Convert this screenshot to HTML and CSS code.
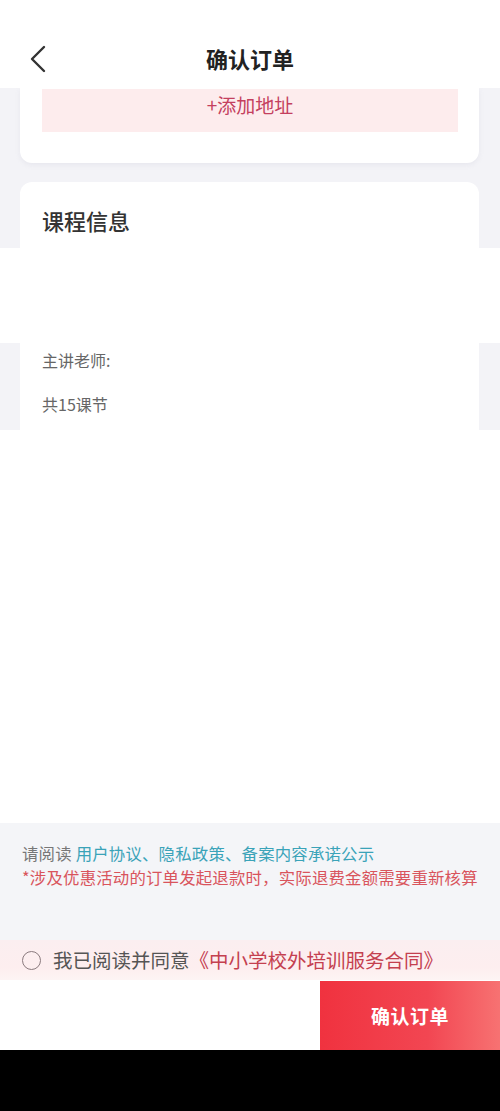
FILE: index.html
```html
<!DOCTYPE html>
<html lang="zh-CN">
<head>
<meta charset="utf-8">
<title>确认订单</title>
<link rel="stylesheet" href="styles.css">
</head>
<body>
<div class="page">
  <header class="topbar">
    <svg class="back" width="24" height="30" viewBox="0 0 24 30" aria-hidden="true">
      <path d="M16 3 L4 15 L16 27" fill="none" stroke="#333" stroke-width="2.4" stroke-linecap="round" stroke-linejoin="round"/>
    </svg>
    <h1 class="title">确认订单</h1>
  </header>

  <section class="gray-zone">
    <div class="card card-address">
      <div class="add-address">+添加地址</div>
    </div>
    <div class="card card-course">
      <h2 class="card-title">课程信息</h2>
    </div>
  </section>

  <div class="blank blank-a"></div>

  <section class="side-zone">
    <div class="course-info">
      <p class="info-line">主讲老师:</p>
      <p class="info-line">共15课节</p>
    </div>
  </section>

  <div class="blank blank-b"></div>

  <section class="notice">
    <p class="notice-line">请阅读 <span class="link">用户协议、隐私政策、备案内容承诺公示</span></p>
    <p class="notice-line warn">*涉及优惠活动的订单发起退款时，实际退费金额需要重新核算</p>
  </section>

  <section class="agree">
    <span class="radio"></span>
    <span class="agree-text">我已阅读并同意<span class="contract">《中小学校外培训服务合同》</span></span>
  </section>

  <footer class="bottom-bar">
    <button class="submit">确认订单</button>
  </footer>

  <div class="black"></div>
</div>
</body>
</html>
```

FILE: styles.css
```css
* { box-sizing: border-box; }

html, body {
  margin: 0;
  padding: 0;
  background: #ffffff;
}

body {
  font-family: "Noto Sans CJK SC", "Noto Sans", sans-serif;
  color: #333;
}

.page {
  width: 500px;
  display: flex;
  flex-direction: column;
}

.topbar {
  height: 88px;
  background: #fff;
  display: flex;
  align-items: center;
  justify-content: center;
  position: relative;
  padding-top: 28px;
}

.back {
  position: absolute;
  left: 28px;
  top: 44px;
}

.title {
  margin: 0;
  font-size: 22px;
  line-height: 30px;
  font-weight: 700;
  color: #222;
}

.gray-zone {
  height: 160px;
  background: #f3f3f7;
  padding: 0 21px 0 20px;
  display: flex;
  flex-direction: column;
  gap: 19px;
}

.card {
  background: #fff;
}

.card-address {
  border-radius: 0 0 12px 12px;
  padding: 1px 21px 31px 22px;
  box-shadow: 0 2px 4px rgba(200, 200, 215, 0.25);
}

.add-address {
  height: 43px;
  background: #fdeced;
  color: #c4405e;
  font-size: 19px;
  display: flex;
  align-items: center;
  justify-content: center;
  padding-bottom: 12px;
}

.card-course {
  flex: 1;
  border-radius: 12px 12px 0 0;
  padding: 23px 22px 0;
}

.card-title {
  margin: 0;
  font-size: 22px;
  line-height: 30px;
  font-weight: 500;
  color: #333;
}

.blank { background: #fff; }
.blank-a { height: 95px; }
.blank-b { height: 393px; }

.side-zone {
  height: 87px;
  background: #f3f3f7;
  padding: 0 21px 0 20px;
  display: flex;
}

.course-info {
  flex: 1;
  background: #fff;
  padding: 6px 22px 0;
  display: flex;
  flex-direction: column;
  gap: 22px;
}

.info-line {
  margin: 0;
  font-size: 16px;
  line-height: 22px;
  color: #666;
}

.notice {
  height: 117px;
  background: #f4f5f8;
  padding: 18px 0 0 22px;
}

.notice-line {
  margin: 0;
  font-size: 16.4px;
  line-height: 24px;
  color: #777;
  white-space: nowrap;
  letter-spacing: 0.2px;
}

.link { color: #3aa3b8; }

.warn {
  color: #d9545c;
}

.agree {
  height: 40px;
  background: linear-gradient(to bottom, #fbeef0 0%, #fdeeef 70%, #fdf4f4 100%);
  display: flex;
  align-items: center;
  padding-left: 22px;
  gap: 12px;
}

.radio {
  width: 19px;
  height: 19px;
  border: 1.6px solid #8a7a7e;
  border-radius: 50%;
  flex: none;
}

.agree-text {
  font-size: 19.5px;
  line-height: 26px;
  color: #555;
  white-space: nowrap;
}

.contract { color: #c4404f; }

.bottom-bar {
  height: 70px;
  background: #fff;
  display: flex;
  justify-content: flex-end;
  padding-top: 1px;
}

.submit {
  width: 180px;
  height: 69px;
  border: 0;
  margin: 0;
  padding: 0;
  background: linear-gradient(to right, #f0323f 0%, #f24652 60%, #f77272 100%);
  color: #fff;
  font-family: "Noto Sans CJK SC", "Noto Sans", sans-serif;
  font-size: 19px;
  font-weight: 700;
  letter-spacing: 0.5px;
}

.black {
  height: 61px;
  background: #000;
}
```
